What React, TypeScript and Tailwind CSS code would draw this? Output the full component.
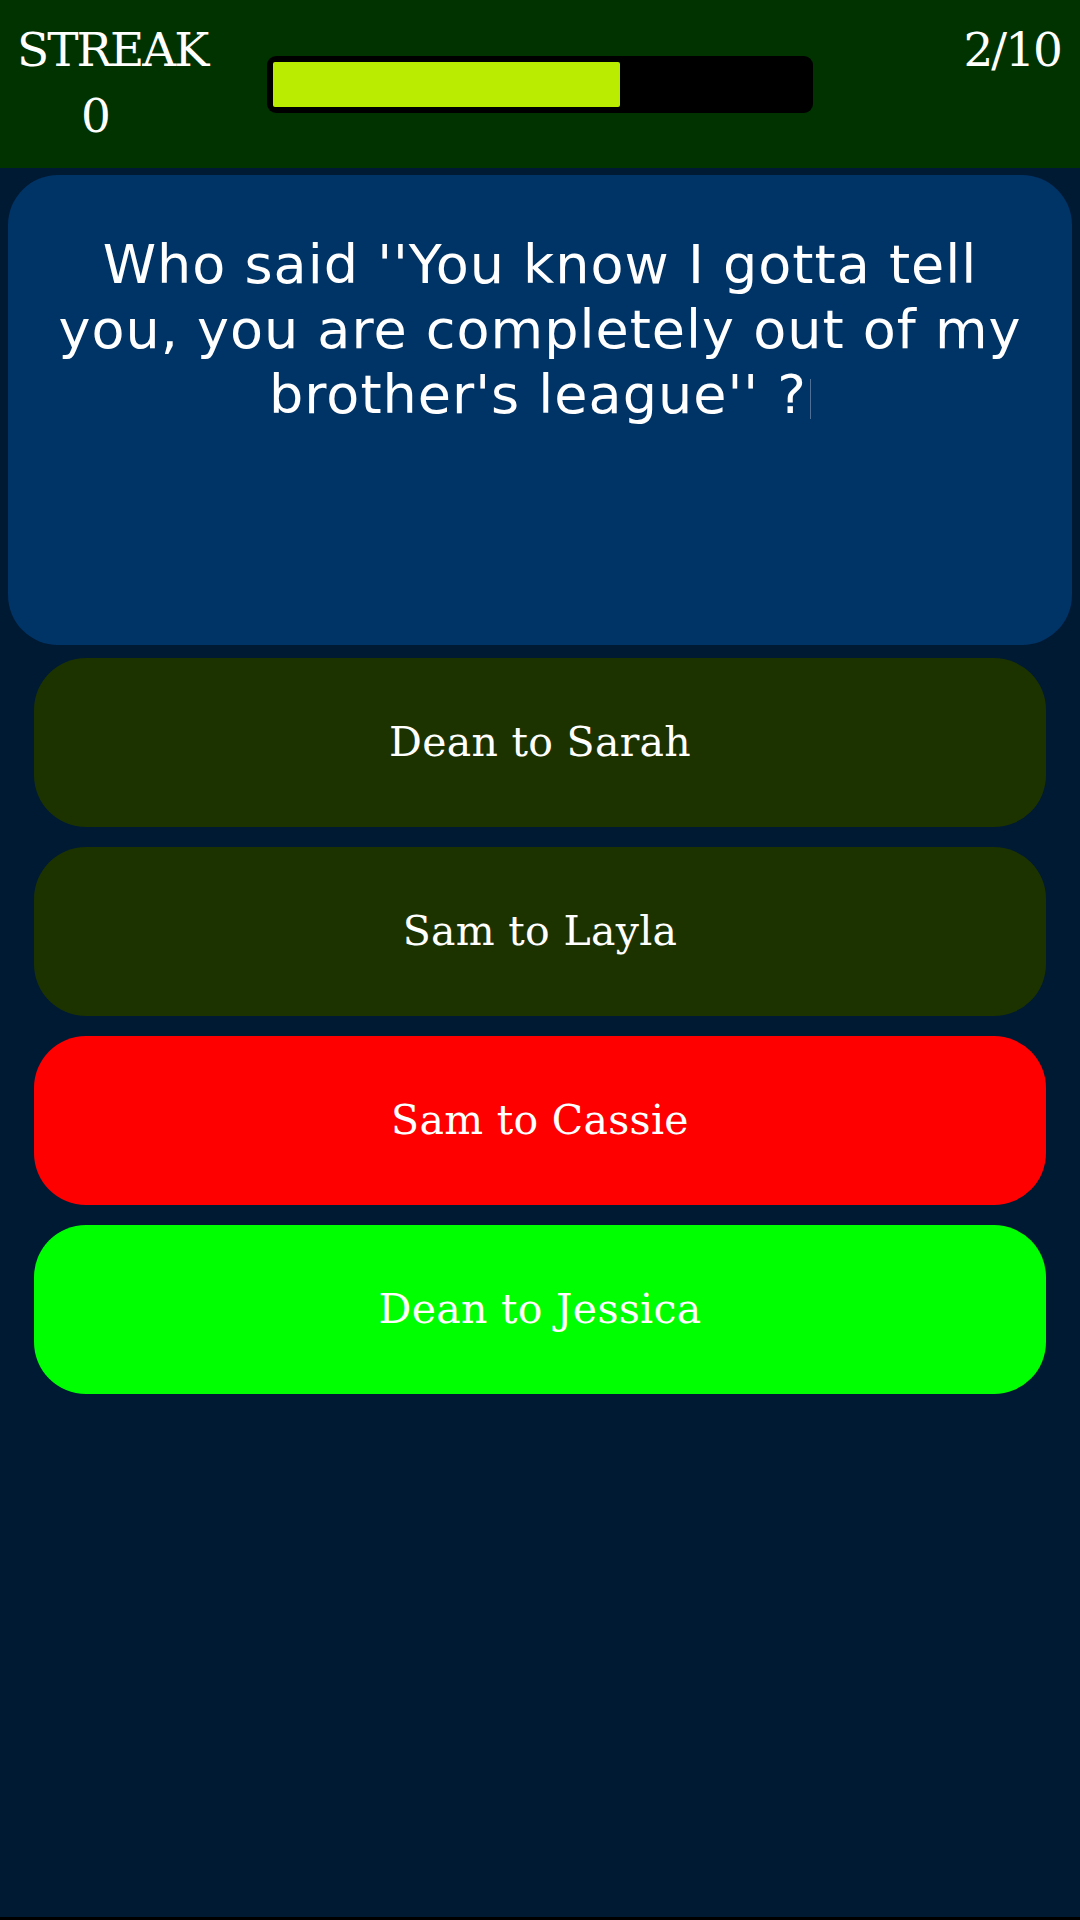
const answers = [
  { label: 'Dean to Sarah', tone: 'bg-[#1c3300]' },
  { label: 'Sam to Layla', tone: 'bg-[#1c3300]' },
  { label: 'Sam to Cassie', tone: 'bg-[#ff0000]' },
  { label: 'Dean to Jessica', tone: 'bg-[#00ff00]' },
];

const serif = "font-['DejaVu_Serif',serif]";

function Header() {
  return (
    <div className={`flex h-[168px] items-start bg-[#003300] text-white ${serif}`}>
      <div className="flex w-[210px] flex-col pl-[17px] pt-[22px]">
        <span className="text-[47px] leading-[56px] tracking-[-2px]">STREAK</span>
        <span className="mt-[10px] pl-[64px] text-[47px] leading-[56px]">0</span>
      </div>
      <div className="ml-[57px] mt-[56px] h-[57px] w-[546px] rounded-[9px] bg-black p-[6px]">
        <div className="h-full w-[65%] rounded-[2px] bg-[#b9ec00]" />
      </div>
      <div className="ml-auto pr-[19px] pt-[22px] text-[47px] leading-[56px] tracking-[-2px]">2/10</div>
    </div>
  );
}

export default function App() {
  return (
    <div className="flex min-h-[1920px] w-[1080px] flex-col bg-[#001a33]">
      <Header />
      <div className="mx-[8px] mt-[7px] h-[470px] rounded-[50px] bg-[#003366] px-[40px] pt-[57px] text-center font-['DejaVu_Sans',sans-serif] text-[54px] leading-[65px] tracking-[1px] text-white">
        Who said ''You know I gotta tell you, you are completely out of my brother's league'' ?
        <span className="ml-[3px] inline-block h-[40px] w-px bg-white/30 align-[-6px]" />
      </div>
      <div className="mx-[34px] mt-[13px] flex flex-col gap-[20px]">
        {answers.map((a) => (
          <div
            key={a.label}
            className={`flex h-[169px] items-center justify-center rounded-[52px] ${a.tone} ${serif} text-[41px] tracking-[0.3px] text-white`}
          >
            {a.label}
          </div>
        ))}
      </div>
      <div className="flex-1" />
      <div className="h-[3px] bg-black" />
    </div>
  );
}
